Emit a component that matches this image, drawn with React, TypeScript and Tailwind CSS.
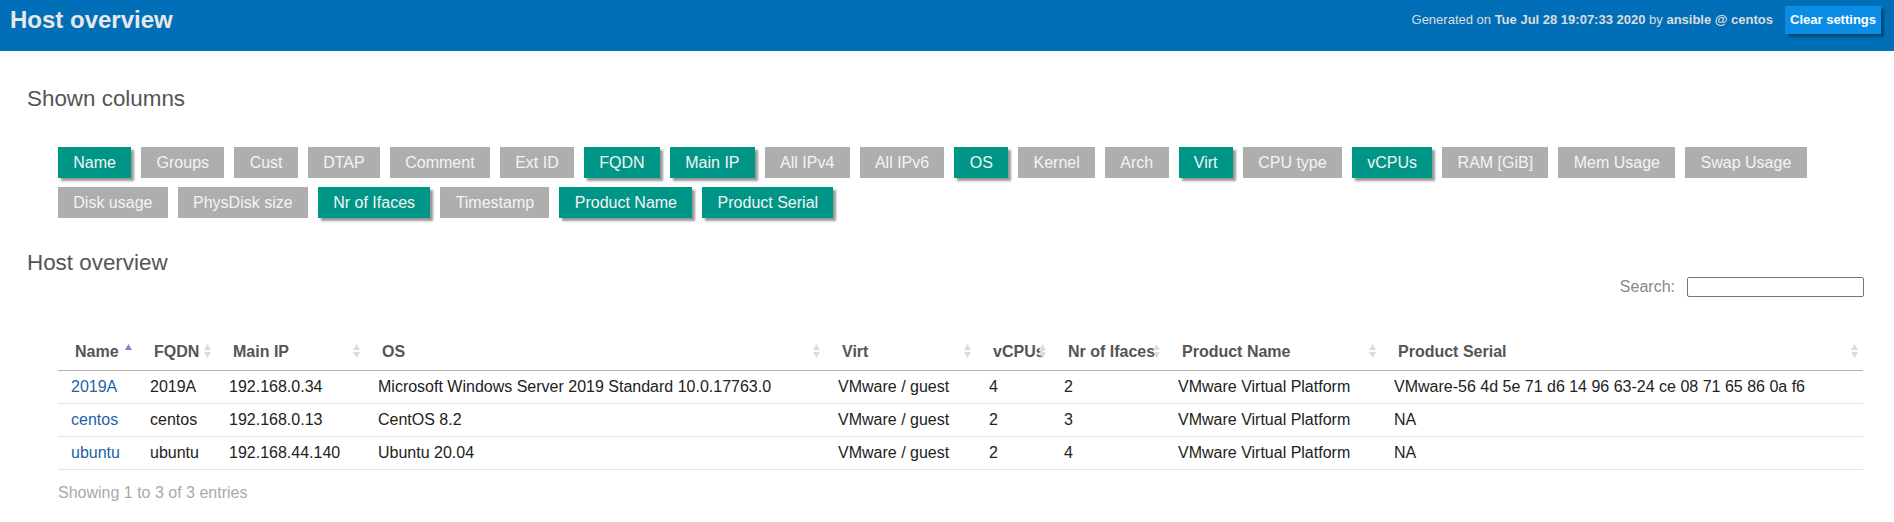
import React from "react";

const columnButtons: [string, boolean][] = [
  ["Name", true],
  ["Groups", false],
  ["Cust", false],
  ["DTAP", false],
  ["Comment", false],
  ["Ext ID", false],
  ["FQDN", true],
  ["Main IP", true],
  ["All IPv4", false],
  ["All IPv6", false],
  ["OS", true],
  ["Kernel", false],
  ["Arch", false],
  ["Virt", true],
  ["CPU type", false],
  ["vCPUs", true],
  ["RAM [GiB]", false],
  ["Mem Usage", false],
  ["Swap Usage", false],
  ["Disk usage", false],
  ["PhysDisk size", false],
  ["Nr of Ifaces", true],
  ["Timestamp", false],
  ["Product Name", true],
  ["Product Serial", true],
];

const headers = [
  { label: "Name", width: "w-[79px]" },
  { label: "FQDN", width: "w-[79px]" },
  { label: "Main IP", width: "w-[149px]" },
  { label: "OS", width: "w-[460px]" },
  { label: "Virt", width: "w-[151px]" },
  { label: "vCPUs", width: "w-[75px]" },
  { label: "Nr of Ifaces", width: "w-[114px]" },
  { label: "Product Name", width: "w-[216px]" },
  { label: "Product Serial", width: "w-[482px]" },
];

const hosts = [
  ["2019A", "2019A", "192.168.0.34", "Microsoft Windows Server 2019 Standard 10.0.17763.0", "VMware / guest", "4", "2", "VMware Virtual Platform", "VMware-56 4d 5e 71 d6 14 96 63-24 ce 08 71 65 86 0a f6"],
  ["centos", "centos", "192.168.0.13", "CentOS 8.2", "VMware / guest", "2", "3", "VMware Virtual Platform", "NA"],
  ["ubuntu", "ubuntu", "192.168.44.140", "Ubuntu 20.04", "VMware / guest", "2", "4", "VMware Virtual Platform", "NA"],
];

const SortIcon = ({ asc }: { asc?: boolean }) => (
  <span className="absolute right-[5px] top-[10px] flex flex-col gap-[2px]">
    <svg width="7" height="6" viewBox="0 0 7 6">
      <polygon points="3.5,0 7,6 0,6" fill={asc ? "#7d7fdc" : "#dcdcdc"} />
    </svg>
    <svg width="7" height="6" viewBox="0 0 7 6">
      <polygon points="0,0 7,0 3.5,6" fill={asc ? "transparent" : "#dcdcdc"} />
    </svg>
  </span>
);

const App = () => {
  return (
    <div className="min-h-[522px] bg-white font-['Liberation_Sans',Arial,sans-serif] text-[16px] text-[#222]">
      {/* Top bar */}
      <header className="h-[51px] bg-[#006fb8] flex items-start justify-between pl-[10px] pr-[13px]">
        <h1 className="mt-[6px] text-[24px] leading-[28px] font-bold text-[#e8e8e8]">Host overview</h1>
        <div className="mt-[6px] flex items-center gap-[12px]">
          <span className="text-[13px] text-[#dcdcdc]">
            Generated on <b>Tue Jul 28 19:07:33 2020</b> by <b>ansible @ centos</b>
          </span>
          <button className="h-[28px] px-[5px] bg-[#0b8de6] text-white text-[13px] font-bold shadow-[3px_3px_2px_rgba(0,0,0,0.35)]">
            Clear settings
          </button>
        </div>
      </header>

      <main className="pb-[20px]">
        <h2 className="mt-[35px] ml-[27px] text-[22.4px] leading-[26px] text-[#555]">Shown columns</h2>

        {/* Column toggles */}
        <div className="mt-[35px] ml-[58px] mr-[30px] flex flex-wrap gap-x-[10px] gap-y-[9px]">
          {columnButtons.map(([label, on]) => (
            <button
              key={label}
              className={
                on
                  ? "h-[31px] px-[15.3px] text-[16px] leading-[18px] text-[#f4f4f4] bg-[#009687] shadow-[3px_3px_2px_rgba(0,0,0,0.4)]"
                  : "h-[31px] px-[15.3px] text-[16px] leading-[18px] text-[#f4f4f4] bg-[#aeaeae]"
              }
            >
              {label}
            </button>
          ))}
        </div>

        <h2 className="mt-[32px] ml-[27px] text-[22.4px] leading-[26px] text-[#555]">Host overview</h2>

        <div className="ml-[58px] mr-[30px]">
          <div className="mt-[1px] h-[20px] flex items-center justify-end gap-[12px]">
            <label className="text-[16px] text-[#888]">Search:</label>
            <input className="w-[177px] h-[20px] border border-[#767676] rounded-[2px] bg-white" />
          </div>

          <table className="mt-[37px] table-fixed border-collapse w-[1805px]">
            <colgroup>
              {headers.map((h) => (
                <col key={h.label} className={h.width} />
              ))}
            </colgroup>
            <thead>
              <tr className="border-b border-[#b5b5b5]">
                {headers.map((h, i) => (
                  <th
                    key={h.label}
                    className="relative text-left pl-[17px] pr-[14px] py-[9px] leading-[18px] font-bold text-[#555] whitespace-nowrap"
                  >
                    {h.label}
                    <SortIcon asc={i === 0} />
                  </th>
                ))}
              </tr>
            </thead>
            <tbody>
              {hosts.map((row) => (
                <tr key={row[0]} className="border-b border-[#e3e3e3]">
                  {row.map((cell, i) => (
                    <td key={i} className="pl-[13px] py-[7px] leading-[18px] whitespace-nowrap">
                      {i === 0 ? <a className="text-[#1f62a6]">{cell}</a> : cell}
                    </td>
                  ))}
                </tr>
              ))}
            </tbody>
          </table>

          <div className="mt-[14px] leading-[18px] text-[#aaa]">Showing 1 to 3 of 3 entries</div>
        </div>
      </main>
    </div>
  );
};

export default App;
